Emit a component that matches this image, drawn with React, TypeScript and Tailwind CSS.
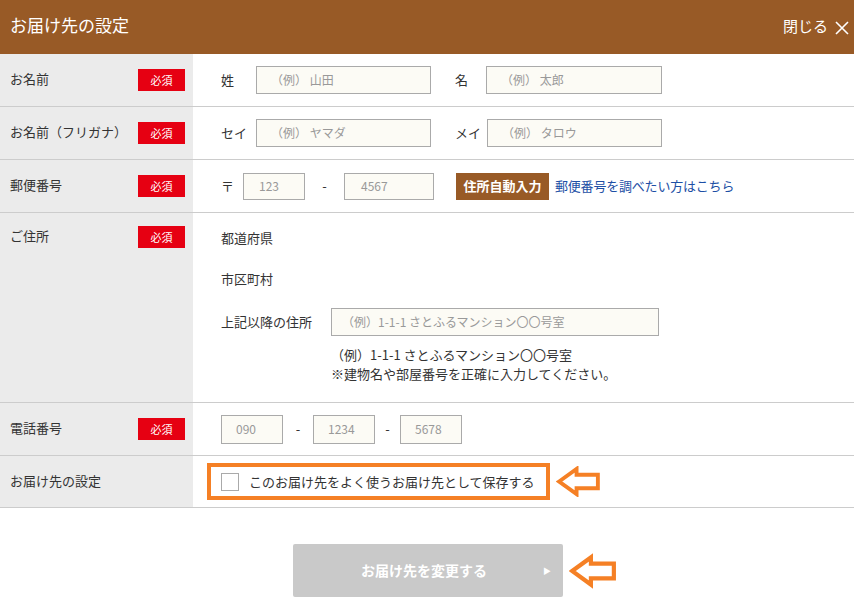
import React from "react";

const font = { fontFamily: '"Noto Sans CJK JP", "Noto Sans", sans-serif' };

function Badge() {
  return (
    <span className="flex h-[22px] w-[47px] items-center justify-center bg-[#e60012] text-[11px] text-white">
      必須
    </span>
  );
}

function Label({ text, req, top }: { text: string; req?: boolean; top?: boolean }) {
  return (
    <div
      className={`flex w-[193px] shrink-0 justify-between bg-[#ebebeb] pl-[10px] pr-[8px] ${
        top ? "items-start pt-[13px]" : "items-center"
      }`}
    >
      <span className="pb-[2px] text-[13px] text-[#333]">{text}</span>
      {req && <Badge />}
    </div>
  );
}

function Input({ w, h = 28, ph, pl = 12 }: { w: number; h?: number; ph: string; pl?: number }) {
  return (
    <div
      className="flex items-center border border-[#aaaaaa] bg-[#fcfbf5] text-[12px] text-[#999]"
      style={{ width: w, height: h, paddingLeft: pl }}
    >
      {ph}
    </div>
  );
}

function Arrow({ w, h }: { w: number; h: number }) {
  return (
    <svg width={w} height={h} viewBox="0 0 46 32">
      <polygon
        points="3,16 21,3 21,9 43,9 43,23 21,23 21,29"
        fill="none"
        stroke="#f58025"
        strokeWidth="4"
        strokeLinejoin="miter"
      />
    </svg>
  );
}

export default function App() {
  return (
    <div className="w-[854px] bg-white" style={font}>
      <div className="flex h-[54px] items-center justify-between bg-[#985a26] pl-[10px] pr-[4px] text-white">
        <span className="pb-[5px] text-[17px]">お届け先の設定</span>
        <div className="flex items-center gap-[6px] pb-[2px]">
          <span className="text-[15px]">閉じる</span>
          <svg width="16" height="16" viewBox="0 0 16 16" className="mt-[3px]">
            <path d="M2 2 L14 14 M14 2 L2 14" stroke="white" strokeWidth="1.6" />
          </svg>
        </div>
      </div>

      <div className="flex h-[53px] border-b border-[#cccccc]">
        <Label text="お名前" req />
        <div className="flex items-center pl-[28px] text-[13px] text-[#333]">
          <span className="w-[35px]">姓</span>
          <Input w={175} ph="（例） 山田" pl={14} />
          <span className="ml-[24px] w-[31px]">名</span>
          <Input w={176} ph="（例） 太郎" pl={14} />
        </div>
      </div>

      <div className="flex h-[53px] border-b border-[#cccccc]">
        <Label text="お名前（フリガナ）" req />
        <div className="flex items-center pl-[28px] text-[13px] text-[#333]">
          <span className="w-[35px]">セイ</span>
          <Input w={175} ph="（例） ヤマダ" pl={14} />
          <span className="ml-[24px] w-[32px]">メイ</span>
          <Input w={175} ph="（例） タロウ" pl={14} />
        </div>
      </div>

      <div className="flex h-[53px] border-b border-[#cccccc]">
        <Label text="郵便番号" req />
        <div className="flex items-center pl-[28px] text-[13px] text-[#333]">
          <span className="w-[22px]">〒</span>
          <Input w={62} h={27} ph="123" pl={15} />
          <span className="w-[39px] text-center">-</span>
          <Input w={90} h={27} ph="4567" pl={16} />
          <span className="ml-[22px] flex h-[27px] w-[93px] items-center justify-center bg-[#985a26] text-[13px] font-bold text-white">
            住所自動入力
          </span>
          <span className="ml-[6px] text-[13px] tracking-[-0.2px] text-[#1d4fa5]">郵便番号を調べたい方はこちら</span>
        </div>
      </div>

      <div className="flex h-[190px] border-b border-[#cccccc]">
        <Label text="ご住所" req top />
        <div className="flex flex-col pl-[28px] pt-[15px] text-[13px] text-[#333]">
          <div className="h-[41px]">都道府県</div>
          <div className="h-[39px]">市区町村</div>
          <div className="flex items-center">
            <span className="w-[110px]">上記以降の住所</span>
            <Input w={328} ph="（例）1-1-1 さとふるマンション〇〇号室" pl={10} />
          </div>
          <div className="ml-[110px] mt-[9px] leading-[19px]">
            <div>（例）1-1-1 さとふるマンション〇〇号室</div>
            <div>※建物名や部屋番号を正確に入力してください。</div>
          </div>
        </div>
      </div>

      <div className="flex h-[53px] border-b border-[#cccccc]">
        <Label text="電話番号" req />
        <div className="flex items-center pl-[28px] text-[13px] text-[#333]">
          <Input w={62} h={29} ph="090" pl={14} />
          <span className="w-[30px] text-center">-</span>
          <Input w={62} h={29} ph="1234" pl={14} />
          <span className="w-[25px] text-center">-</span>
          <Input w={62} h={29} ph="5678" pl={14} />
        </div>
      </div>

      <div className="flex h-[52px] border-b border-[#cccccc]">
        <Label text="お届け先の設定" />
        <div className="flex items-center pl-[14px] text-[13px] text-[#333]">
          <div className="flex h-[37px] w-[343px] items-center border-[4px] border-[#f58025] pl-[10px]">
            <span className="h-[18px] w-[18px] border border-[#aaaaaa] bg-white" />
            <span className="ml-[10px]">このお届け先をよく使うお届け先として保存する</span>
          </div>
          <div className="ml-[6px] flex items-center">
            <Arrow w={45} h={31} />
          </div>
        </div>
      </div>

      <div className="flex items-center pl-[293px] pt-[36px]">
        <div className="relative flex h-[53px] w-[270px] items-center justify-center rounded-[2px] bg-[#c9c9c9] pr-[8px] text-[14px] font-bold text-white">
          お届け先を変更する
          <span className="absolute right-[12px] text-[8px]">▶</span>
        </div>
        <div className="ml-[6px]">
          <Arrow w={48} h={38} />
        </div>
      </div>
    </div>
  );
}
